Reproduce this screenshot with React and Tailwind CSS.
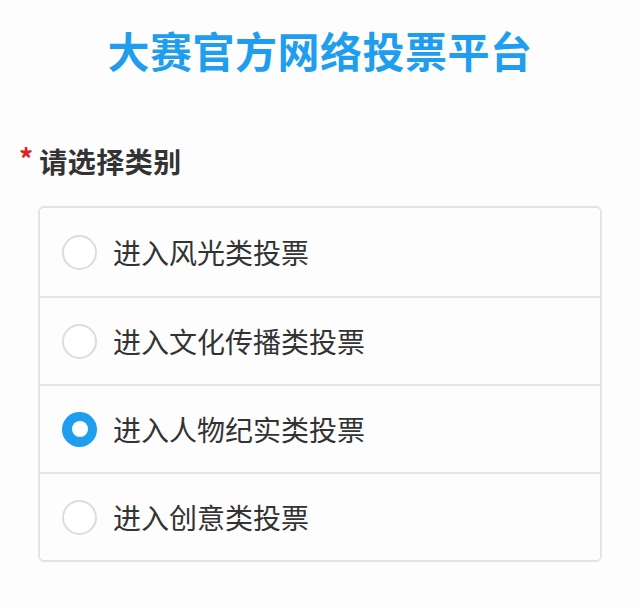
import React, { useState } from 'react';

const options = [
  '进入风光类投票',
  '进入文化传播类投票',
  '进入人物纪实类投票',
  '进入创意类投票',
];

const Radio = ({ checked }) => (
  checked ? (
    <span className="w-[35px] h-[35px] rounded-full bg-[#1f9ef0] flex items-center justify-center shrink-0">
      <span className="w-[16px] h-[16px] rounded-full bg-white"></span>
    </span>
  ) : (
    <span className="w-[35px] h-[35px] rounded-full border-2 border-[#dcdcdc] bg-white shrink-0"></span>
  )
);

export default function App() {
  const [selected, setSelected] = useState(2);

  return (
    <div
      className="w-[640px] h-[607px] bg-[#fdfdfd] overflow-hidden"
      style={{ fontFamily: '"Noto Sans CJK SC", "Noto Sans", sans-serif' }}
    >
      <h1 className="pt-[21px] text-center text-[42px] leading-[58px] font-bold text-[#1f9ef0] tracking-[0.5px]">
        大赛官方网络投票平台
      </h1>

      <div className="mt-[63px] pl-[19px] flex items-center h-[38px]">
        <span className="text-[#e0201c] text-[28px] font-bold leading-none mr-[6px] -mt-[6px]">*</span>
        <span className="text-[28px] font-bold text-[#333] leading-none tracking-[0.5px]">请选择类别</span>
      </div>

      <div className="mt-[26px] ml-[38px] w-[564px] rounded-[6px] border-2 border-[#e3e3e3] bg-[#fdfdfd]">
        {options.map((label, index) => (
          <div
            key={label}
            onClick={() => setSelected(index)}
            className={`h-[88px] flex items-center pl-[22px] cursor-pointer ${
              index > 0 ? 'border-t-2 border-[#e6e6e6]' : ''
            }`}
          >
            <Radio checked={selected === index} />
            <span className="ml-[16px] text-[28px] text-[#333] leading-none">{label}</span>
          </div>
        ))}
      </div>
    </div>
  );
}
